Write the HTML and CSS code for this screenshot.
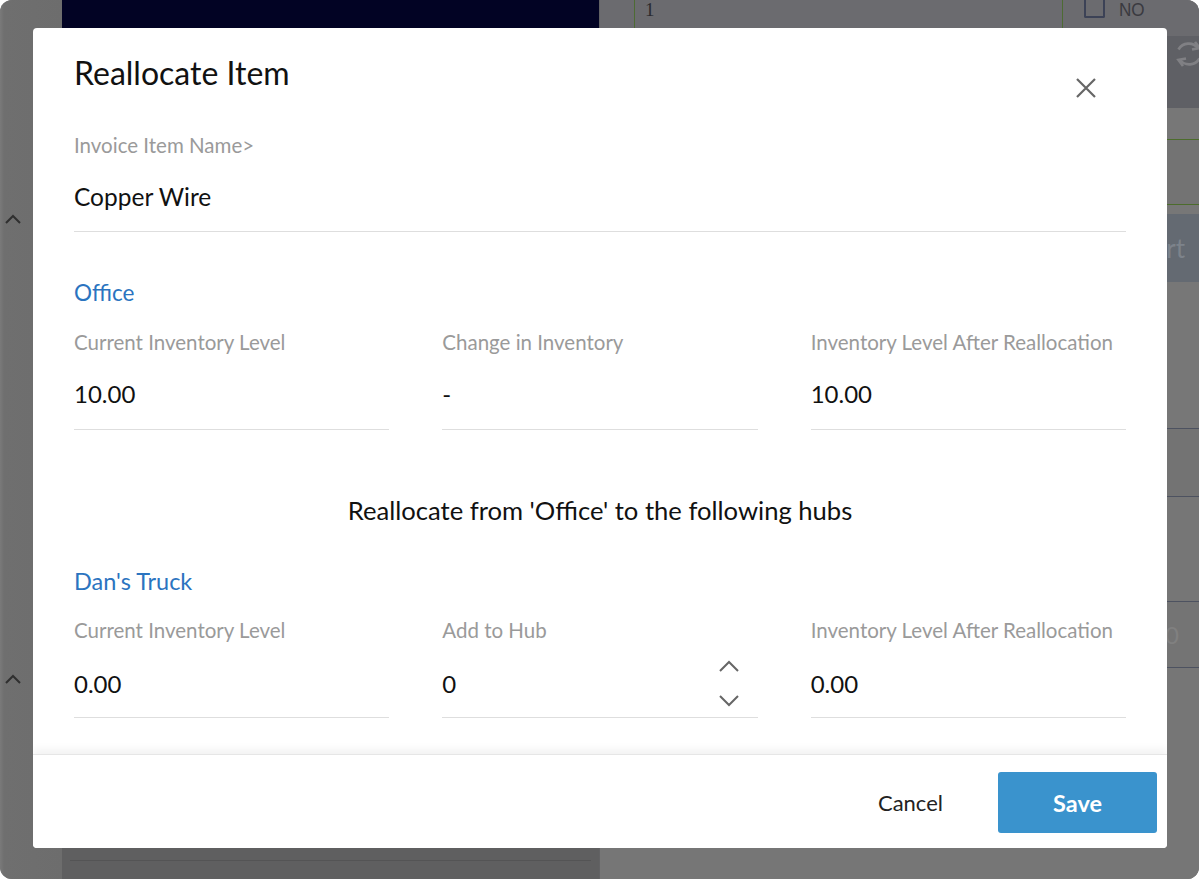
FILE: index.html
```html
<!DOCTYPE html>
<html lang="en">
<head>
<meta charset="utf-8">
<title>Reallocate Item</title>
<link rel="stylesheet" href="styles.css">
</head>
<body>
<div class="window">
  <aside class="side">
    <svg class="side-chev side-chev-1" viewBox="0 0 20 12" width="20" height="12"><path d="M3 10 L10 3 L17 10" fill="none" stroke="#2f2f2f" stroke-width="2"/></svg>
    <svg class="side-chev side-chev-2" viewBox="0 0 20 12" width="20" height="12"><path d="M3 10 L10 3 L17 10" fill="none" stroke="#2f2f2f" stroke-width="2"/></svg>
  </aside>
  <section class="panel">
    <div class="panel-head"></div>
    <div class="panel-body"></div>
    <div class="panel-foot"><div class="panel-foot-line"></div></div>
  </section>
  <section class="table">
    <div class="trow trow-top">
      <div class="tcell tcell-a"></div>
      <div class="tcell tcell-b">1</div>
      <div class="tcell tcell-c"><span class="tcheck"></span><span class="tno">NO</span></div>
    </div>
    <div class="trow trow-tools">
      <svg class="refresh" viewBox="0 0 24 24" width="36" height="36"><path d="M18 8 A8 8 0 0 0 5 9" fill="none" stroke="#808084" stroke-width="1.8"/><path d="M16 4 L19 8 L14 9" fill="none" stroke="#808084" stroke-width="1.8"/><path d="M6 16 A8 8 0 0 0 19 15" fill="none" stroke="#808084" stroke-width="1.8"/><path d="M8 20 L5 16 L10 15" fill="none" stroke="#808084" stroke-width="1.8"/></svg>
    </div>
    <div class="trow trow-c"></div>
    <div class="trow trow-d"></div>
    <div class="trow trow-e"></div>
    <div class="trow trow-btn"><span class="btn-ghost">Export</span></div>
    <div class="trow trow-g"></div>
    <div class="trow trow-h"></div>
    <div class="trow trow-i"></div>
    <div class="trow trow-j"><span class="ghost-num">0</span></div>
    <div class="trow trow-k"></div>
  </section>

  <div class="modal" role="dialog" aria-labelledby="modal-title">
    <div class="modal-body">
      <h1 class="modal-title" id="modal-title">Reallocate Item</h1>
      <button class="close" aria-label="Close">
        <svg viewBox="0 0 20 20" width="20" height="20"><path d="M1 1 L19 19 M19 1 L1 19" stroke="#666" stroke-width="2.2" fill="none"/></svg>
      </button>

      <div class="field field-item">
        <div class="label">Invoice Item Name&gt;</div>
        <div class="value">Copper Wire</div>
      </div>

      <h2 class="hub">Office</h2>
      <div class="cols">
        <div class="field">
          <div class="label">Current Inventory Level</div>
          <div class="value">10.00</div>
        </div>
        <div class="field">
          <div class="label">Change in Inventory</div>
          <div class="value">-</div>
        </div>
        <div class="field">
          <div class="label">Inventory Level After Reallocation</div>
          <div class="value">10.00</div>
        </div>
      </div>

      <h3 class="section-title">Reallocate from 'Office' to the following hubs</h3>

      <h2 class="hub hub-2">Dan's Truck</h2>
      <div class="cols cols-2">
        <div class="field">
          <div class="label">Current Inventory Level</div>
          <div class="value">0.00</div>
        </div>
        <div class="field field-stepper">
          <div class="label">Add to Hub</div>
          <div class="value">0</div>
          <div class="stepper">
            <svg viewBox="0 0 22 12" width="22" height="12"><path d="M2 11 L11 2 L20 11" fill="none" stroke="#666" stroke-width="2"/></svg>
            <svg viewBox="0 0 22 12" width="22" height="12"><path d="M2 1 L11 10 L20 1" fill="none" stroke="#666" stroke-width="2"/></svg>
          </div>
        </div>
        <div class="field">
          <div class="label">Inventory Level After Reallocation</div>
          <div class="value">0.00</div>
        </div>
      </div>
    </div>
    <div class="modal-foot">
      <button class="btn btn-cancel">Cancel</button>
      <button class="btn btn-save">Save</button>
    </div>
  </div>
</div>
</body>
</html>
```

FILE: styles.css
```css
* { box-sizing: border-box; }

html, body {
  margin: 0;
  padding: 0;
  background: #ffffff;
}

body {
  font-family: "Lato", "Open Sans", sans-serif;
  color: #111;
}

.window {
  position: relative;
  width: 1199px;
  height: 879px;
  border-radius: 12px;
  overflow: hidden;
  background: #6f6f71;
  display: grid;
  grid-template-columns: 62px 538px 1fr;
}

/* ---------- backdrop (dimmed page) ---------- */
.side {
  position: relative;
  background: linear-gradient(90deg, #7a7a7a 0, #6f6f6f 4px, #6d6d6d 100%);
}
.side-chev { position: absolute; left: 3px; }
.side-chev-1 { top: 213px; }
.side-chev-2 { top: 673px; }

.panel {
  display: flex;
  flex-direction: column;
  background: #6a6a6c;
  border-right: 1px solid #626264;
}
.panel-head { height: 28px; background: #020324; }
.panel-body { flex: 1; }
.panel-foot { height: 31px; background: #5f5f60; padding: 12px 8px 0; }
.panel-foot-line { height: 1px; background: #545455; }

.table {
  display: flex;
  flex-direction: column;
  background: linear-gradient(90deg, #757575 0, #757575 94%, #7e7e7e 100%);
}
.trow { flex: none; }
.trow-top {
  height: 36px;
  display: flex;
  background: #6b6b6f;
}
.tcell { height: 100%; }
.tcell-a { width: 34px; }
.tcell-b {
  width: 429px;
  border-left: 1px solid #4d6b33;
  border-right: 1px solid #4d6b33;
  padding-left: 10px;
  padding-top: 1px;
  font-family: "Liberation Serif", serif;
  font-size: 19px;
  line-height: 18px;
  color: #2a2a2e;
}
.tcell-c {
  flex: 1;
  display: flex;
  align-items: flex-start;
  gap: 14px;
  padding-left: 21px;
}
.tcheck {
  display: block;
  width: 21px;
  height: 18px;
  border: 2px solid #3c4256;
  border-top: none;
  border-radius: 0 0 2px 2px;
}
.tno {
  font-family: "Liberation Sans", sans-serif;
  font-size: 19px;
  line-height: 18px;
  padding-top: 1px;
  color: #3a3a40;
  transform: scaleX(0.9);
  transform-origin: left;
}
.trow-tools {
  height: 72px;
  background: #5f6065;
  display: flex;
  justify-content: flex-end;
  align-items: flex-start;
  padding-top: 0;
  overflow: hidden;
}
.refresh { display: block; margin-right: -8px; }
.trow-c { height: 32px; background: #777; border-bottom: 1px solid #4c6c2c; }
.trow-d { height: 65px; background: #737373; border-bottom: 1px solid #4c6c2c; }
.trow-e { height: 9px; background: #777; }
.trow-btn {
  height: 68px;
  background: #646a72;
  display: flex;
  justify-content: flex-end;
  align-items: center;
  overflow: hidden;
}
.btn-ghost {
  font-family: "Lato", sans-serif;
  font-size: 26px;
  color: #7d838b;
  margin-right: 14px;
}
.trow-g { height: 147px; background: #777; border-bottom: 1px solid #4d5260; }
.trow-h { height: 68px; background: #737373; border-bottom: 1px solid #4d5260; }
.trow-i { height: 105px; background: #767676; border-bottom: 1px solid #4d5260; }
.trow-j {
  height: 66px;
  background: #747474;
  border-bottom: 1px solid #4d5260;
  display: flex;
  justify-content: flex-end;
  align-items: center;
  padding-right: 20px;
}
.ghost-num { font-size: 24px; color: #808080; }
.trow-k { flex: 1; background: #767676; }

/* ---------- modal ---------- */
.modal {
  position: absolute;
  left: 33px;
  top: 28px;
  width: 1134px;
  height: 820px;
  background: #fff;
  border-radius: 4px;
  display: flex;
  flex-direction: column;
  overflow: hidden;
}

.modal-body {
  position: relative;
  flex: 1;
  padding: 27px 41px 0;
}

.modal-title {
  margin: 0;
  font-size: 32px;
  line-height: 35px;
  font-weight: 400;
  color: #111;
}

.close {
  position: absolute;
  left: 1043px;
  top: 50px;
  width: 20px;
  height: 20px;
  padding: 0;
  border: 0;
  background: transparent;
}
.close svg { display: block; }

.field {
  position: relative;
  border-bottom: 1px solid #dedede;
}
.label {
  font-size: 20.5px;
  line-height: 24px;
  color: #9a9a9a;
}
.value {
  font-size: 24px;
  line-height: 30px;
  color: #111;
  margin-top: 25px;
  padding-bottom: 20px;
}

.field-item { margin-top: 43px; }
.field-item .value { font-size: 24.5px; padding-bottom: 19px; }

.hub {
  margin: 47px 0 0;
  font-size: 22.5px;
  line-height: 28px;
  font-weight: 400;
  color: #2b74c0;
}
.hub-2 { margin-top: 42px; font-size: 23.5px; }

.cols {
  display: grid;
  grid-template-columns: repeat(3, 1fr);
  column-gap: 53px;
  margin-top: 23px;
}
.cols-2 .value { margin-top: 27px; padding-bottom: 18px; }

.section-title {
  margin: 65px 0 0;
  text-align: center;
  font-size: 25.6px;
  line-height: 30px;
  font-weight: 400;
  color: #111;
}

.stepper {
  position: absolute;
  right: 18px;
  top: 42px;
  display: flex;
  flex-direction: column;
  gap: 23px;
}
.stepper svg { display: block; }

.modal-foot {
  flex: none;
  height: 94px;
  border-top: 1px solid #e6e6e6;
  box-shadow: 0 -5px 8px rgba(0, 0, 0, 0.05);
  display: flex;
  justify-content: flex-end;
  align-items: flex-start;
  padding: 17px 10px 0 0;
  gap: 20px;
  position: relative;
  background: #fff;
}

.btn {
  font-family: "Lato", "Open Sans", sans-serif;
  font-size: 22px;
  height: 61px;
  border: 0;
  border-radius: 3px;
  cursor: pointer;
}
.btn-cancel {
  background: transparent;
  color: #222;
  padding: 0 35px;
}
.btn-save {
  width: 159px;
  background: #3a93cd;
  color: #fff;
  font-size: 23.5px;
  font-weight: 700;
}
```
